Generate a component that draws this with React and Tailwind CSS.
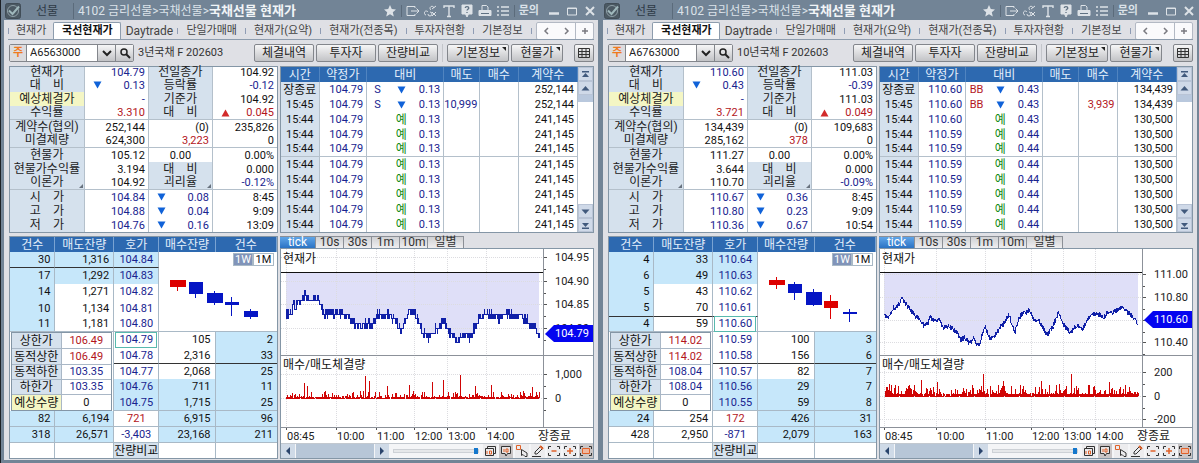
import React, { useMemo, useState } from "react";
import clsx from "clsx";

const INK = {
    blue: "text-[#18248f]",
    red: "text-[#b3161c]",
    green: "text-[#118a11]",
    black: "text-[#111]",
};

const ten = {
    code: "A6763000",
    name: "10년국채 F 202603",
    price: "110.60",
    change: "0.43",
    yield: "3.721",
    prevClose: "111.03",
    rate: "-0.39",
    base: "111.03",
    yieldDiff: "0.049",
    volume: "134,439",
    prevVolume: "109,683",
    openInterest: "285,162",
    oiDiff: "378",
    spot: "111.27",
    spotYield: "3.644",
    theory: "110.70",
    gap: "-0.09%",
    ohl: [
        ["110.67", "0.36", "8:45"],
        ["110.80", "0.23", "9:09"],
        ["110.36", "0.67", "10:54"],
    ],
    flag: "BB",
    flagInk: "red",
    ticks: [
        { time: "장종료", price: "110.60", diff: "0.43", vol: "134,439", down: true },
        { time: "15:45", price: "110.60", diff: "0.43", vol: "134,439", down: true, buy: "3,939" },
        { time: "15:44", price: "110.60", diff: "0.43", vol: "130,500" },
        ...Array(7).fill({ time: "15:44", price: "110.59", diff: "0.44", vol: "130,500" }),
    ],
    asks: [
        ["4", "33", "110.64"],
        ["6", "49", "110.63"],
        ["5", "43", "110.62"],
        ["5", "70", "110.61"],
        ["4", "59", "110.60"],
    ],
    bids: [
        ["110.59", "100", "3"],
        ["110.58", "156", "6"],
        ["110.57", "82", "7"],
        ["110.56", "29", "7"],
        ["110.55", "59", "8"],
    ],
    askLine: 3,
    totals: [
        { cells: ["24", "254", "172", "426", "31"], fill: [true, false] },
        { cells: ["428", "2,950", "-871", "2,079", "163"], fill: [false, false] },
    ],
    limits: { up: "114.02", down: "108.04" },
    candles: [
        { x: 11, w: 16, top: 14, h: 5, hi: 11, lo: 23, up: true },
        { x: 30, w: 14, top: 18, h: 9, hi: 16, lo: 34 },
        { x: 48, w: 16, top: 26, h: 13, hi: 23, lo: 40 },
        { x: 66, w: 14, top: 35, h: 7, hi: 29, lo: 53, up: true },
        { x: 85, w: 14, top: 46, h: 2, hi: 43, lo: 56 },
    ],
    chart: {
        step: 0,
        noise: 5,
        seed: 7,
        marker: 70,
        yLabels: [["111.00", 25], ["110.80", 48], ["110.60", 71], ["110.40", 93]],
        volLabels: [["200", 123], ["0", 147], ["-200", 170]],
        times: [["08:45", 4], ["10:00", 56], ["11:00", 105], ["12:00", 151], ["13:00", 183], ["14:00", 215]],
        volBase: 147,
        volMin: 2,
        volAvg: 5,
        gaps: 0.04,
        spikes: [[41, 16], [57, 14], [103, 22], [123, 15], [161, 15], [191, 22], [229, 14]],
        line: [
            [4, 65], [8, 68], [13, 59], [18, 57], [22, 50], [28, 58], [34, 65], [39, 70], [44, 77], [48, 74],
            [50, 67], [54, 73], [59, 71], [63, 78], [68, 77], [73, 80], [76, 83], [81, 91], [85, 88], [89, 95],
            [93, 90], [99, 97], [102, 87], [105, 78], [110, 90], [115, 87], [120, 78], [124, 75], [129, 65],
            [132, 75], [135, 84], [139, 70], [143, 64], [149, 62], [154, 70], [159, 70], [163, 79], [167, 86],
            [173, 78], [176, 70], [179, 63], [183, 74], [190, 84], [196, 77], [203, 79], [208, 70], [213, 65],
            [218, 65], [223, 68], [229, 62], [233, 63], [238, 60], [242, 57], [246, 62], [251, 66], [254, 69], [258, 74],
        ],
    },
};

const three = {
    code: "A6563000",
    name: "3년국채 F 202603",
    price: "104.79",
    change: "0.13",
    yield: "3.310",
    prevClose: "104.92",
    rate: "-0.12",
    base: "104.92",
    yieldDiff: "0.045",
    volume: "252,144",
    prevVolume: "235,826",
    openInterest: "624,300",
    oiDiff: "3,223",
    spot: "105.12",
    spotYield: "3.194",
    theory: "104.92",
    gap: "-0.12%",
    ohl: [
        ["104.84", "0.08", "8:45"],
        ["104.88", "0.04", "9:09"],
        ["104.76", "0.16", "13:09"],
    ],
    flag: "S",
    flagInk: "blue",
    ticks: [
        { time: "장종료", price: "104.79", diff: "0.13", vol: "252,144", down: true },
        { time: "15:45", price: "104.79", diff: "0.13", vol: "252,144", down: true, sell: "10,999" },
        ...Array(8).fill({ time: "15:44", price: "104.79", diff: "0.13", vol: "241,145" }),
    ],
    asks: [
        ["30", "1,316", "104.84"],
        ["17", "1,292", "104.83"],
        ["14", "1,271", "104.82"],
        ["10", "1,134", "104.81"],
        ["11", "1,181", "104.80"],
    ],
    bids: [
        ["104.79", "105", "2"],
        ["104.78", "2,316", "33"],
        ["104.77", "2,068", "25"],
        ["104.76", "711", "11"],
        ["104.75", "1,715", "25"],
    ],
    askLine: 0,
    totals: [
        { cells: ["82", "6,194", "721", "6,915", "96"], fill: [true, true] },
        { cells: ["318", "26,571", "-3,403", "23,168", "211"], fill: [true, true] },
    ],
    limits: { up: "106.49", down: "103.35" },
    candles: [
        { x: 11, w: 16, top: 14, h: 7, hi: 14, lo: 25, up: true },
        { x: 30, w: 14, top: 16, h: 12, hi: 16, lo: 32 },
        { x: 48, w: 16, top: 27, h: 10, hi: 25, lo: 39 },
        { x: 66, w: 14, top: 36, h: 3, hi: 31, lo: 50 },
        { x: 85, w: 14, top: 45, h: 6, hi: 43, lo: 53 },
    ],
    chart: {
        step: 4.7,
        noise: 9,
        seed: 3,
        marker: 84,
        yLabels: [["104.95", 8], ["104.90", 32], ["104.85", 55], ["104.80", 79]],
        volLabels: [["1,000", 125], ["0", 149]],
        times: [["08:45", 5], ["10:00", 55], ["11:00", 95], ["12:00", 133], ["13:00", 166], ["14:00", 205]],
        volBase: 149,
        volMin: 1,
        volAvg: 3,
        gaps: 0.12,
        spikes: [[23, 15], [26, 12], [84, 22], [88, 17], [106, 12], [128, 13], [151, 16], [162, 18], [179, 23], [194, 12], [210, 13], [251, 11]],
        line: [
            [5, 65], [9, 64], [13, 56], [17, 54], [20, 52], [23, 46], [26, 49], [33, 49], [37, 49], [39, 59],
            [43, 65], [49, 62], [53, 65], [56, 63], [63, 67], [68, 69], [73, 74], [79, 77], [85, 74], [91, 75],
            [96, 66], [103, 67], [108, 67], [113, 70], [116, 74], [120, 82], [124, 70], [128, 64], [133, 64],
            [137, 72], [141, 83], [144, 85], [149, 88], [153, 82], [158, 77], [162, 68], [166, 80], [171, 86],
            [176, 94], [180, 86], [186, 88], [190, 87], [194, 77], [199, 69], [204, 64], [211, 67], [218, 70],
            [223, 65], [229, 66], [238, 64], [243, 69], [248, 73], [253, 77], [258, 84],
        ],
    },
};

const Down = () => (
    <svg width="9" height="8" viewBox="0 0 9 8" className="inline-block" aria-hidden="true">
        <path d="M0.5 0.5h8L4.5 7.5z" fill="#1062d8" />
    </svg>
);

const Up = () => (
    <svg width="9" height="8" viewBox="0 0 9 8" className="inline-block" aria-hidden="true">
        <path d="M0.5 7.5h8L4.5 0.5z" fill="#d22a2a" />
    </svg>
);

const Corner = () => (
    <svg width="4" height="4" viewBox="0 0 4 4" className="absolute right-[1px] bottom-[1px]" aria-hidden="true">
        <path d="M4 0v4H0z" fill="#68727e" />
    </svg>
);

/* ---------- title bar ---------- */

const titleIcons = [
    ["즐겨찾기", <path key="a" d="M7 1l1.8 4 4.2.4-3.2 2.8 1 4.3L7 10.200 3.200 12.500l1-4.300L1 5.400l4.200-.4z" fill="#dde2e7" stroke="none" />],
    null,
    ["내보내기", <path key="b" d="M9 4V2.500H1v9h8V10M5 7h8M10.500 4.500L13 7l-2.500 2.500" />],
    ["연결", <path key="c" d="M2 11a2 2 0 1 1 2-3M4 10a2 2 0 1 0 2-2M7 6a2 2 0 1 1 3-2M8 5l4-3M8 8l4 4M12 8l-4 4" />],
    ["글꼴", <path key="d" d="M2 4V2h10v2M7 2v10.500M5 12.500h4" strokeWidth="1.400" />],
    ["도움말", <g key="e"><path d="M2 1h10v9H8.500L7 13l-1.500-3H2z" fill="#dde2e7" /><path d="M5.200 4c.2-2 3.600-1.800 3.600 0 0 1.300-1.800 1.300-1.800 2.600M7 8v1" stroke="#5f7182" strokeWidth="1.300" /></g>],
    ["인쇄", <g key="f"><path d="M4 6V1.500h4.500L10 3v3" /><path d="M1 6.500h12v5H1z" fill="#dde2e7" /><path d="M3 9.500h8" stroke="#5f7182" /></g>],
    ["목록", <path key="g" d="M1 3h2M5 3h8M1 7h2M5 7h8M1 11h2M5 11h8" strokeWidth="1.500" />],
    null,
];

const Glyph = ({ children }) => (
    <svg width="14" height="14" viewBox="0 0 14 14" fill="none" stroke="#dde2e7" strokeWidth="1">
        {children}
    </svg>
);

function TitleBar() {
    return (
        <header className="flex h-5 items-center pl-[1px] pr-px pt-[2px] text-[#dbe2e9]">
            <svg width="16" height="16" viewBox="0 0 16 16" className="shrink-0" aria-hidden="true">
                <rect x="0.500" y="0.500" width="15" height="15" rx="2" fill="#4b5963" stroke="#414d57" />
                <circle cx="8" cy="8" r="5.500" fill="none" stroke="#8fa0a8" />
                <path d="M4 7.500l3.500 3.500L14 3.500" fill="none" stroke="#9fb8bc" strokeWidth="2" />
            </svg>
            <button className="ml-[15px] text-[12px] leading-4 text-[#2f3b47]">선물</button>
            <i className="ml-[15px] h-4 w-px bg-[#5b6b7b]"></i>
            <h1 className="ml-1 whitespace-nowrap text-[12px] leading-4">
                4102 금리선물&gt;국채선물&gt;
                <b className="text-[13px] font-bold text-[#f1f4f7]">국채선물 현재가</b>
            </h1>
            <div className="ml-auto flex items-center gap-1">
                {titleIcons.map((icon, i) =>
                    icon ? (
                        <button key={i} aria-label={icon[0]} className="w-[14px]">
                            <Glyph>{icon[1]}</Glyph>
                        </button>
                    ) : (
                        <i key={i} className="h-3 w-px bg-[#5b6b7b]"></i>
                    )
                )}
                <button className="text-[11px] font-bold leading-4">문의</button>
                <button aria-label="최소화" className="ml-1 w-[14px]">
                    <Glyph><path d="M2 9.500h10" strokeWidth="2.500" /></Glyph>
                </button>
                <button aria-label="최대화" className="w-[14px]">
                    <Glyph><path d="M2.500 4h9v7h-9zM2.500 4.500h9" /></Glyph>
                </button>
                <button aria-label="닫기" className="w-[14px]">
                    <Glyph><path d="M3 3l8 8M11 3l-8 8" strokeWidth="2" /></Glyph>
                </button>
            </div>
        </header>
    );
}

/* ---------- tabs and toolbar ---------- */

const tabs = ["단일가매매", "현재가(요약)", "현재가(전종목)", "투자자현황", "기본정보"];

const Sep = () => <i className="h-[6px] w-px shrink-0 bg-[#8f9cb4]"></i>;

function Tabs() {
    return (
        <nav className="mx-1 flex h-5 items-center overflow-hidden border-b border-[#8d9cad] pt-[2px] text-[11px] leading-4 text-[#444]">
            <Sep />
            <button className="h-4 shrink-0 px-[7px]">현재가</button>
            <button className="h-[18px] w-[68px] shrink-0 rounded-t-[2px] border border-b-0 border-[#8d9cad] bg-white font-bold text-[#111]">국선현재가</button>
            <button className="h-4 w-14 shrink-0 text-[12px]">Daytrade</button>
            {tabs.map((t) => (
                <React.Fragment key={t}>
                    <Sep />
                    <button className="h-4 shrink-0 px-2">{t}</button>
                </React.Fragment>
            ))}
            <Sep />
            <div className="ml-auto flex h-[18px] shrink-0 rounded-[2px] border border-[#b3b9c4] bg-[#fafafc] text-[#666]">
                <button className="w-[19px]" aria-label="이전"><Arrow d="M7 3L4 6l3 3" /></button>
                <button className="w-[19px]" aria-label="다음"><Arrow d="M5 3l3 3-3 3" /></button>
                <button className="w-[18px] border-l border-[#b3b9c4]" aria-label="추가"><Arrow d="M6 3v6M3 6h6" /></button>
            </div>
        </nav>
    );
}

const Arrow = ({ d }) => (
    <svg width="12" height="12" viewBox="0 0 12 12" className="mx-auto" fill="none" stroke="#7a7a80" strokeWidth="1.500">
        <path d={d} />
    </svg>
);

const btn = "relative h-[18px] shrink-0 rounded-[2px] border border-[#83868c] bg-linear-to-b from-[#f6f6f7] to-[#c2c3c6] text-[12px] leading-4 text-[#222]";

const Mark = () => (
    <svg width="4" height="4" viewBox="0 0 4 4" className="absolute right-[2px] top-[2px]" aria-hidden="true">
        <path d="M0 0h4v4z" fill="#222" />
    </svg>
);

function Toolbar({ d }) {
    const [code, setCode] = useState(d.code);
    return (
        <div className="flex h-[26px] items-center pl-[5px] pr-1">
            <div className="flex h-[18px] w-[125px] shrink-0 rounded-[2px] border border-[#83868c] bg-white">
                <button className="w-[17px] border-r border-[#83868c] bg-[#dcdcde] text-[11px] font-bold leading-4 text-[#f07a1e]">주</button>
                <input
                    aria-label="종목코드"
                    value={code}
                    onChange={(e) => setCode(e.target.value)}
                    className="w-[70px] min-w-0 flex-1 px-[3px] text-[11px] leading-4 text-[#222] outline-none"
                />
                <button aria-label="종목 목록" className="w-[18px] border-l border-[#83868c] bg-linear-to-b from-[#f6f6f7] to-[#c2c3c6]">
                    <svg width="12" height="12" viewBox="0 0 12 12" className="mx-auto" fill="none" stroke="#222" strokeWidth="2"><path d="M2 4l4 4 4-4" /></svg>
                </button>
                <button aria-label="검색" className="w-[18px] border-l border-[#83868c] bg-linear-to-b from-[#f6f6f7] to-[#c2c3c6]">
                    <svg width="12" height="12" viewBox="0 0 12 12" className="mx-auto" fill="none" stroke="#222" strokeWidth="1.500"><circle cx="5" cy="5" r="3" /><path d="M7 7l4 4" strokeWidth="2" /></svg>
                </button>
            </div>
            <span className="ml-1 whitespace-nowrap text-[11px] leading-4 text-[#333]">{d.name}</span>
            <div className="ml-auto flex items-center gap-[2px]">
                <button className={clsx(btn, "w-[60px]")}>체결내역</button>
                <button className={clsx(btn, "w-[60px]")}>투자자</button>
                <button className={clsx(btn, "w-[60px]")}>잔량비교</button>
                <i className="mx-[2px] h-[18px] w-px bg-[#c3c5ca]"></i>
                <button className={clsx(btn, "w-[62px]")}>기본정보<Mark /></button>
                <button className={clsx(btn, "w-[52px]")}>현물가<Mark /></button>
                <button aria-label="표 보기" className={clsx(btn, "ml-[9px] w-5")}>
                    <svg width="12" height="10" viewBox="0 0 12 10" className="mx-auto" fill="none" stroke="#333"><path d="M.5.5h11v9H.5zM.5 3.500h11M.5 6.500h11M4 .5v9M8 .5v9" /></svg>
                </button>
            </div>
        </div>
    );
}

/* ---------- quote summary ---------- */

function Value({ children, ink = "black", mark, line, center }) {
    return (
        <td className={clsx("border-r border-[#b4c0cb] px-[3px] text-[11px] last:border-r-0", INK[ink], line && "border-b")}>
            <div className={clsx("flex items-center", center ? "justify-center" : mark ? "justify-between pl-[5px]" : "justify-end")}>
                {mark === "down" && <Down />}
                {mark === "up" && <Up />}
                <span>{children}</span>
            </div>
        </td>
    );
}

function Label({ children, yellow, corner, line }) {
    return (
        <th className={clsx("relative whitespace-nowrap border-r border-[#b4c0cb] p-0 text-center font-normal text-[#222]", yellow ? "bg-[#f4f6c4]" : "bg-[#d5e1ed]", line && "border-b")}>
            {children}
            {corner && <Corner />}
        </th>
    );
}

const row = "h-[14px]";

function Summary({ d }) {
    const [o, h, l] = d.ohl;
    return (
        <div className="border border-[#8496a6] bg-white">
            <table className="w-full table-fixed border-separate border-spacing-0 text-[12px] leading-[13px]">
                <colgroup>
                    <col className="w-[28%]" />
                    <col className="w-[24%]" />
                    <col className="w-[24%]" />
                    <col className="w-[24%]" />
                </colgroup>
                <tbody>
                    <tr className="h-[11px] leading-[11px]">
                        <Label>현재가</Label><Value ink="blue">{d.price}</Value>
                        <Label>전일종가</Label><Value>{d.prevClose}</Value>
                    </tr>
                    <tr className={row}>
                        <Label>대{"\u3000"}비</Label><Value ink="blue" mark="down">{d.change}</Value>
                        <Label>등락률</Label><Value ink="blue">{d.rate}</Value>
                    </tr>
                    <tr className={row}>
                        <Label yellow>예상체결가</Label><Value ink="blue">-</Value>
                        <Label>기준가</Label><Value>{d.base}</Value>
                    </tr>
                    <tr className={row}>
                        <Label line>수익률</Label><Value ink="red" line>{d.yield}</Value>
                        <Label line>대{"\u3000"}비</Label><Value ink="red" mark="up" line>{d.yieldDiff}</Value>
                    </tr>
                    <tr className={row}>
                        <Label>계약수(협의)</Label><Value>{d.volume}</Value>
                        <Value>(0)</Value><Value>{d.prevVolume}</Value>
                    </tr>
                    <tr className={row}>
                        <Label line>미결제량</Label><Value line>{d.openInterest}</Value>
                        <Value ink="red" line>{d.oiDiff}</Value><Value line>0</Value>
                    </tr>
                    <tr className={row}>
                        <Label>현물가</Label><Value>{d.spot}</Value>
                        <Value center>0.00</Value><Value>0.00%</Value>
                    </tr>
                    <tr className={row}>
                        <Label>현물가수익률</Label><Value>{d.spotYield}</Value>
                        <Label>대{"\u3000"}비</Label><Value>0.000</Value>
                    </tr>
                    <tr className={row}>
                        <Label corner line>이론가</Label><Value line>{d.theory}</Value>
                        <Label corner line>괴리율</Label><Value ink="blue" line>{d.gap}</Value>
                    </tr>
                    {[["시", o], ["고", h], ["저", l]].map(([name, v]) => (
                        <tr key={name} className={row}>
                            <Label>{name}{"\u3000"}가</Label>
                            <Value ink="blue">{v[0]}</Value>
                            <Value ink="blue" mark="down">{v[1]}</Value>
                            <Value>{v[2]}</Value>
                        </tr>
                    ))}
                </tbody>
            </table>
        </div>
    );
}

/* ---------- time and sales ---------- */

const ScrollBtn = ({ label, d }) => (
    <button aria-label={label} className="h-[14px] w-full border border-[#b9c4d6] bg-[#cfd9e8]">
        <svg width="9" height="9" viewBox="0 0 9 9" className="mx-auto" fill="#41597c" stroke="none"><path d={d} /></svg>
    </button>
);

function TimeSales({ d }) {
    const cell = "border-r border-[#b4c0cb] p-0";
    return (
        <div className="flex border border-[#8496a6] bg-white">
            <table className="w-full table-fixed border-separate border-spacing-0 text-[12px] leading-[14px]">
                <colgroup>
                    <col className="w-[13%]" />
                    <col className="w-[16%]" />
                    <col className="w-[7%]" />
                    <col className="w-[9%]" />
                    <col className="w-[10%]" />
                    <col className="w-[12%]" />
                    <col className="w-[13%]" />
                    <col className="w-[20%]" />
                </colgroup>
                <thead>
                    <tr className="h-[15px] bg-[#2d69b0] text-[#e4effb]">
                        {["시간", "약정가", "대비", "매도", "매수", "계약수"].map((t) => (
                            <th key={t} colSpan={t === "대비" ? 3 : 1} className="border-r border-[#5084c0] p-0 text-center font-normal">{t}</th>
                        ))}
                    </tr>
                </thead>
                <tbody className="text-[11px]">
                    {d.ticks.map((t, i) => {
                        const line = i === 4 && "border-b";
                        return (
                            <tr key={i} className="h-[15px]">
                                <td className={clsx(cell, "whitespace-nowrap bg-[#d5e1ed] text-center", i === 0 && "text-[12px]", line)}>{t.time}</td>
                                <td className={clsx(cell, "pr-[3px] text-right", INK.blue, line)}>{t.price}</td>
                                <td className={clsx("border-[#b4c0cb] p-0 text-center", INK[d.flagInk], line)}>{t.down ? d.flag : ""}</td>
                                <td className={clsx("border-[#b4c0cb] p-0 text-center text-[12px]", INK.green, line)}>{t.down ? <Down /> : "예"}</td>
                                <td className={clsx(cell, "pr-[3px] text-right", INK.blue, line)}>{t.diff}</td>
                                <td className={clsx(cell, "pr-[2px] text-right", INK.blue, line)}>{t.sell}</td>
                                <td className={clsx(cell, "pr-[2px] text-right", INK.red, line)}>{t.buy}</td>
                                <td className={clsx(cell, "pr-[3px] text-right", line)}>{t.vol}</td>
                            </tr>
                        );
                    })}
                </tbody>
            </table>
            <div className="flex w-[15px] shrink-0 flex-col bg-white">
                <ScrollBtn label="맨 위로" d="M1 1h7v1.500H1zM4.500 3L8 7H1z" />
                <ScrollBtn label="위로" d="M4.500 2L8.500 6.500h-8z" />
                <div className="h-[7px] bg-[#b9c8dd]"></div>
                <div className="flex-1"></div>
                <ScrollBtn label="아래로" d="M4.500 7L.5 2.500h8z" />
                <ScrollBtn label="맨 아래로" d="M1 6.500h7V8H1zM4.500 6L1 2h7z" />
            </div>
        </div>
    );
}

/* ---------- order book ---------- */

function Limits({ d }) {
    const rows = [
        ["상한가", d.limits.up, "red"],
        ["동적상한", d.limits.up, "red"],
        ["동적하한", d.limits.down, "blue"],
        ["하한가", d.limits.down, "blue"],
        ["예상수량", "0", "black"],
    ];
    return (
        <div className="mx-[1px] border border-[#8496a6]">
            <table className="w-full table-fixed border-separate border-spacing-0 leading-[14px]">
                <tbody>
                    {rows.map(([name, v, ink], i) => (
                        <tr key={name} className={i < 2 ? "h-4" : "h-[15px]"}>
                            <th className={clsx("whitespace-nowrap border-b border-r border-[#a9b7c6] p-0 text-center text-[12px] font-normal", i === 4 ? "border-b-0 bg-[#f4f6c4]" : "bg-[#d5e1ed]")}>{name}</th>
                            <td className={clsx("border-b border-[#a9b7c6] bg-white p-0 text-center", i === 4 && "border-b-0", INK[ink])}>{v}</td>
                        </tr>
                    ))}
                </tbody>
            </table>
        </div>
    );
}

function Candles({ list }) {
    return (
        <svg className="block h-[65px] w-full" aria-label="주봉">
            {list.map((c) => (
                <g key={c.x} fill={c.up ? "#dd0000" : "#0515c4"}>
                    <rect x={c.x + c.w / 2 - 1} y={c.hi} width="1" height={c.lo - c.hi} />
                    <rect x={c.x} y={c.top} width={c.w} height={c.h} />
                </g>
            ))}
        </svg>
    );
}

function OrderBook({ d }) {
    const v = "border-r border-[#a9b9c6] p-0 pr-1 text-right";
    const cyan = "bg-[#c6e7fa]";
    const price = (p) => (
        <span className={clsx("block text-center", p === d.price && "mx-[1px] -my-px border border-[#58b9ae]")}>{p}</span>
    );
    return (
        <div className="border border-[#8496a6] bg-white">
            <table className="w-full table-fixed border-separate border-spacing-0 text-[12px] leading-[14px]">
                <colgroup>
                    <col className="w-[17%]" />
                    <col className="w-[22%]" />
                    <col className="w-[17%]" />
                    <col className="w-[21%]" />
                    <col className="w-[23%]" />
                </colgroup>
                <thead>
                    <tr className="h-[15px] bg-[#2d69b0] text-[#e4effb]">
                        {["건수", "매도잔량", "호가", "매수잔량", "건수"].map((t, i) => (
                            <th key={i} className="whitespace-nowrap border-r border-[#7aa3d2] p-0 text-center font-normal">{t}</th>
                        ))}
                    </tr>
                </thead>
                <tbody className="text-[11px]">
                    {d.asks.map((a, i) => {
                        const line = i === d.askLine ? "border-b border-b-[#333]" : i === 4 && "border-b";
                        return (
                            <tr key={a[2]} className={i === 4 ? "h-[15px]" : "h-4"}>
                                <td className={clsx(v, cyan, line)}>{a[0]}</td>
                                <td className={clsx(v, i < 2 && cyan, line)}>{a[1]}</td>
                                <td className={clsx("border-r border-[#a9b9c6] p-0", INK.blue, i < 2 && cyan, line)}>{price(a[2])}</td>
                                {i === 0 && (
                                    <td rowSpan={5} colSpan={2} className="border-b border-[#a9b9c6] p-0 align-top">
                                        <div className="flex justify-end pr-[3px] pt-[1px]">
                                            <button className="h-[13px] w-5 border border-[#a9b9c6] bg-[#8194b9] leading-[11px] text-white">1W</button>
                                            <button className="h-[13px] w-[21px] border border-[#a9b9c6] leading-[11px]">1M</button>
                                        </div>
                                        <Candles list={d.candles} />
                                    </td>
                                )}
                            </tr>
                        );
                    })}
                    {d.bids.map((b, i) => {
                        const line = i === 1 ? "border-b border-b-[#333]" : i === 4 && "border-b";
                        return (
                            <tr key={b[0]} className={i === 2 ? "h-[15px]" : "h-4"}>
                                {i === 0 && (
                                    <td rowSpan={5} colSpan={2} className="border-r border-[#a9b9c6] p-0 align-top">
                                        <Limits d={d} />
                                    </td>
                                )}
                                <td className={clsx("border-r border-[#a9b9c6] p-0", INK.blue, i > 2 && cyan, line)}>{price(b[0])}</td>
                                <td className={clsx(v, i > 2 && cyan, line)}>{b[1]}</td>
                                <td className={clsx(v, "border-r-0", cyan, line)}>{b[2]}</td>
                            </tr>
                        );
                    })}
                    {d.totals.map((t, n) => (
                        <tr key={n} className="h-4">
                            {t.cells.map((c, i) => (
                                <td
                                    key={i}
                                    className={clsx(
                                        "border-b border-r border-[#a9b9c6] p-0 last:border-r-0",
                                        i === 2 ? "text-center" : "pr-1 text-right",
                                        i === 2 && (n === 0 ? INK.red : INK.blue),
                                        (i < 2 ? t.fill[i] : i > 2) && cyan
                                    )}
                                >
                                    {c}
                                </td>
                            ))}
                        </tr>
                    ))}
                    <tr className="h-[15px]">
                        <td className="border-r border-[#a9b9c6] p-0"></td>
                        <td className="border-r border-[#a9b9c6] p-0"></td>
                        <td className="whitespace-nowrap border-r border-[#a9b9c6] bg-[#d5e1ed] p-0 text-center text-[12px]">잔량비교</td>
                        <td className="border-r border-[#a9b9c6] p-0"></td>
                        <td className="p-0"></td>
                    </tr>
                </tbody>
            </table>
        </div>
    );
}

/* ---------- chart ---------- */

function random(seed) {
    let s = seed * 7919;
    return () => {
        s = (s * 16807) % 2147483647;
        return s / 2147483647;
    };
}

// fills the key points with tick noise, two samples per pixel
function buildPrice(c) {
    const rnd = random(c.seed);
    const first = c.line[0][0];
    const last = c.line[c.line.length - 1][0];
    let k = 0;
    let out = "";
    for (let x = first; x <= last; x += 0.5) {
        while (c.line[k + 1][0] < x) k++;
        const [x0, y0] = c.line[k];
        const [x1, y1] = c.line[k + 1];
        let y = y0 + ((y1 - y0) * (x - x0)) / (x1 - x0) + (rnd() - 0.5) * c.noise;
        if (c.step) {
            y = c.marker + Math.round((y - c.marker) / c.step) * c.step;
            out += `${out ? "H" + x : "M" + x + " " + y}V${y.toFixed(1)}`;
        } else {
            out += `${out ? "L" : "M"}${x} ${y.toFixed(1)}`;
        }
    }
    return { d: out, first, last };
}

function buildVolume(c) {
    const rnd = random(c.seed + 11);
    let out = "";
    for (let x = 5; x < 259; x++) {
        const r = rnd();
        const spike = c.spikes.find((s) => s[0] === x);
        const h = spike ? spike[1] : r < c.gaps ? 0 : c.volMin + Math.pow(rnd(), 3) * c.volAvg * 2;
        out += `M${x + 0.5} ${c.volBase}v${-h.toFixed(1)}`;
    }
    return out;
}

const grid = { stroke: "#dcdce0", strokeDasharray: "1 1" };

function Chart({ d }) {
    const c = d.chart;
    const line = useMemo(() => buildPrice(c), [c]);
    const volume = useMemo(() => buildVolume(c), [c]);
    // a scale label with the marker's own price would be fully hidden by it
    const scale = c.yLabels.filter(([t]) => t !== d.price);
    return (
        <svg className="block h-[194px] w-full text-[11px]" shapeRendering="crispEdges">
            <path d={`${line.d}V23H${line.first}z`} fill="#dfdff8" />
            {c.times.map(([t, x]) => (
                <g key={t}>
                    <path d={`M${x + 0.5} 0V178`} {...grid} />
                    <path d={`M${x + 0.5} 178v3`} stroke="#555" />
                    <text x={x + 1} y="191" fill="#222">{t}</text>
                </g>
            ))}
            {[...c.yLabels, ...c.volLabels].map(([t, y]) => (
                <g key={t}>
                    <path d={`M0 ${y + 0.5}H262`} {...grid} />
                    <path d={`M263 ${y + 0.5}h3M263 ${y + 12.5}h2`} stroke="#555" />
                </g>
            ))}
            {[...scale, ...c.volLabels].map(([t, y]) => (
                <text key={t} x="274" y={y + 4} fill="#222">{t}</text>
            ))}
            <path d={line.d} fill="none" stroke="#1020a8" />
            <path d={volume} stroke="#d00505" />
            <path d={`M5 ${c.volBase + 0.5}H258`} stroke="#d00505" strokeDasharray="14 1" />
            <path d="M0 23.500H262" stroke="#111" />
            <path d="M0 106.500H314M0 178.500H314" stroke="#8c9199" />
            <path d="M262.500 0V178" stroke="#8c9199" />
            <path d={`M264 ${c.marker + 1}L273 ${c.marker - 8}H312V${c.marker + 9}H273z`} fill="#0404f0" shapeRendering="auto" />
            <text x="274" y={c.marker + 4} fill="#fff">{d.price}</text>
            <g className="text-[12px]">
                <text x="2" y="14" fill="#111">현재가</text>
                <text x="2" y="120" fill="#111">매수/매도체결량</text>
                <text x="257" y="191" fill="#222">장종료</text>
            </g>
        </svg>
    );
}

const tools = [
    ["겹치기", <g key="a"><path d="M4.500 4V2.500h8v7H11" /><path d="M2.500 4.500h8v7h-8z" /><path d="M4 10V7M6.500 10V7h2v3z" stroke="#e0622a" /></g>],
    ["말풍선", <g key="b"><path d="M2.500 2.500h9v7H8.500L7 12l-1-2.500H2.500z" fill="#e7e2e2" /><path d="M5 5v3M7 5h2v3H7z" stroke="#e0622a" /></g>],
    ["선택", <g key="c"><path d="M1.500 1.500h4v4h-4z" stroke="#e0622a" /><path d="M6.500 5.500v6l1.500-1 2 2h2V9z" /></g>],
    ["그리기", <g key="d"><path d="M4 8l6-6 2 2-6 6H4zM1 12.500h9" /><path d="M9 2l3 3" stroke="#e0622a" strokeWidth="2" /></g>],
    ["축소", <g key="e"><path d="M4 2.500H1.500V5M10 2.500h2.500V5M4 11.500H1.500V9M10 11.500h2.500V9" /><path d="M4.500 7h5" stroke="#e0622a" strokeWidth="1.500" /></g>],
    ["확대", <g key="f"><path d="M4 2.500H1.500V5M10 2.500h2.500V5M4 11.500H1.500V9M10 11.500h2.500V9" /><path d="M4 7h6M7 4v6" stroke="#e0622a" strokeWidth="1.500" /></g>],
    ["전체", <g key="g"><path d="M4 2.500H1.500V5M10 2.500h2.500V5M4 11.500H1.500V9M10 11.500h2.500V9" /><path d="M3.500 4.500h7v5h-7z" stroke="#e0622a" fill="#f0b8a0" /></g>],
];

function ChartPanel({ d }) {
    const [period, setPeriod] = useState("tick");
    const [zoom, setZoom] = useState(100);
    const periods = [["tick", "w-9"], ["10s", "w-7"], ["30s", "w-7"], ["1m", "w-7"], ["10m", "w-7"], ["일별", "w-9"]];
    return (
        <div>
            <div className="flex h-3 text-[12px] leading-[11px] text-[#333]">
                {periods.map(([p, w]) => (
                    <button
                        key={p}
                        onClick={() => setPeriod(p)}
                        className={clsx(
                            w,
                            "h-3 border-r border-t border-[#8b8f96]",
                            period === p ? "bg-linear-to-b from-[#5fa5e8] to-[#2a73c4] text-white" : "bg-linear-to-b from-[#d0d1d4] to-[#eeeef0]"
                        )}
                    >
                        {p}
                    </button>
                ))}
            </div>
            <div className="border border-[#8496a6] bg-white">
                <Chart d={d} />
                <div className="flex h-[15px] items-center border-t border-[#c2c8cf] bg-[#f4f5f7]">
                    <button aria-label="왼쪽" className="h-[14px] w-[14px] bg-[#cfdae7]">
                        <svg width="6" height="8" viewBox="0 0 6 8" className="mx-auto"><path d="M5 0v8L1 4z" fill="#2a446c" /></svg>
                    </button>
                    <div className="mx-px h-[14px] w-[78px] bg-[#b7c6d7]"></div>
                    <button aria-label="오른쪽" className="h-[14px] w-[14px] bg-[#cfdae7]">
                        <svg width="6" height="8" viewBox="0 0 6 8" className="mx-auto"><path d="M1 0v8l4-4z" fill="#2a446c" /></svg>
                    </button>
                    <input
                        type="range"
                        aria-label="확대 비율"
                        value={zoom}
                        onChange={(e) => setZoom(e.target.value)}
                        className="ml-1 h-1 w-[86px] appearance-none border border-[#cdd1d6] bg-[#e6e8ea] [&::-webkit-slider-thumb]:h-[6px] [&::-webkit-slider-thumb]:w-1 [&::-webkit-slider-thumb]:appearance-none [&::-webkit-slider-thumb]:bg-[#1477cc]"
                    />
                    <div className="ml-auto flex gap-[2px]">
                        {tools.map(([name, icon], i) => (
                            <button key={name} aria-label={name} className={clsx("h-[14px] w-[14px]", i === 1 || i === 6 ? "bg-[#c9c5c6]" : "bg-[#ececee]")}>
                                <svg width="14" height="14" viewBox="0 0 14 14" fill="none" stroke="#333">{icon}</svg>
                            </button>
                        ))}
                    </div>
                </div>
            </div>
        </div>
    );
}

function QuoteWindow({ d }) {
    return (
        <section className="border-l-[3px] border-r-2 border-b-4 border-[#728496] bg-[#728496]">
            <TitleBar />
            <div className="bg-[#dfe0e5]">
                <Tabs />
                <Toolbar d={d} />
                <div className="grid grid-cols-[269fr_314fr] items-start gap-x-[2px] gap-y-[3px] pb-[1px] pl-[5px] pr-1">
                    <Summary d={d} />
                    <TimeSales d={d} />
                    <OrderBook d={d} />
                    <ChartPanel d={d} />
                </div>
            </div>
        </section>
    );
}

export default function App() {
    return (
        <main className="grid min-h-screen grid-cols-2 items-start border-l border-[#1d2126] bg-[#728496] font-['Roboto','Noto_Sans_CJK_KR',sans-serif] text-[#111]">
            <QuoteWindow d={three} />
            <QuoteWindow d={ten} />
        </main>
    );
}
